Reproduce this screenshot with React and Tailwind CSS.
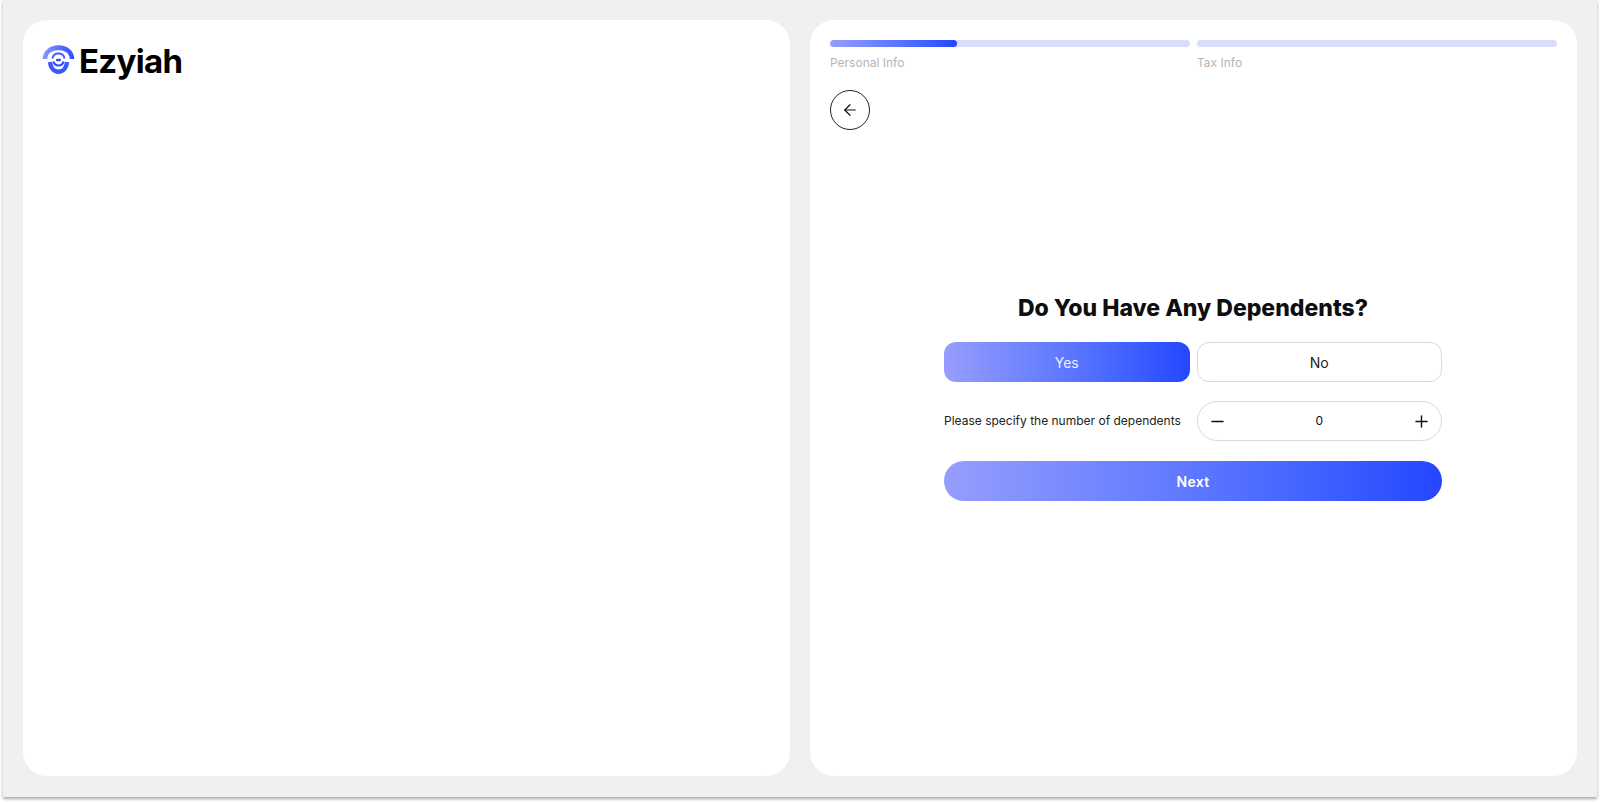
import { ArrowLeft, Minus, Plus } from 'lucide-react';

const Logo = () => (
  <svg width="34" height="32" viewBox="0 0 34 32" fill="none">
    <defs>
      <linearGradient id="logoGrad" x1="0" y1="0" x2="34" y2="0" gradientUnits="userSpaceOnUse">
        <stop offset="0" stopColor="#8f97fd" />
        <stop offset="1" stopColor="#2a49ff" />
      </linearGradient>
    </defs>
    {/* outer top arc */}
    <path d="M3 14C3 7 9 2.6 16.5 2.6C24 2.6 30 7 30 14" stroke="url(#logoGrad)" strokeWidth="4.6" />
    {/* lower arc */}
    <path d="M8 17C8.5 23 12 26.8 16.5 26.8C21 26.8 24.5 23 25 17" stroke="#3a58ff" strokeWidth="4.4" />
    {/* inner ring */}
    <path d="M10.5 13.5C11 10.2 13.5 8.6 16.5 8.6C19.5 8.6 22 10.2 22.5 13.5" stroke="#4560ff" strokeWidth="2" />
    <path d="M11.5 16.5C12 19 14 20.4 16.5 20.4C19 20.4 21 19 21.5 16.5" stroke="#2a49ff" strokeWidth="2" />
    <rect x="14" y="13.7" width="5" height="2.6" rx="1.3" fill="#2a49ff" />
  </svg>
);

function Step({ label, fill }) {
  return (
    <div>
      <div className="h-[7px] rounded-full bg-[#d8ddfc] overflow-hidden">
        {fill && <div className="h-full w-[127px] rounded-full bg-gradient-to-r from-[#979dfd] to-[#2545ff]" />}
      </div>
      <p className="mt-[8px] text-[12px] leading-[16px] text-[#b5b5b5]">{label}</p>
    </div>
  );
}

export default function App() {
  return (
    <div className="h-[803px] bg-white font-['Inter',sans-serif]">
      <div className="mx-[3px] h-[797px] bg-[#eef0f2] shadow-[0_2px_3px_rgba(0,0,0,0.35)] grid grid-cols-2 gap-[20px] px-[20px] pt-[20px] pb-[21px]">
        {/* Left panel */}
        <div className="bg-white rounded-[24px] pl-[19px] pt-[23px]">
          <div className="flex items-center gap-[3px]">
            <Logo />
            <span className="text-[33px] leading-[36px] font-bold tracking-[-0.7px] text-black">Ezyiah</span>
          </div>
        </div>

        {/* Right panel */}
        <div className="bg-white rounded-[24px] px-[20px] pt-[20px] flex flex-col">
          <div className="grid grid-cols-2 gap-[7px]">
            <Step label="Personal Info" fill />
            <Step label="Tax Info" />
          </div>
          <button className="mt-[19px] w-[40px] h-[40px] rounded-full border border-[#222] flex items-center justify-center text-[#111]">
            <ArrowLeft size={18} strokeWidth={1.6} />
          </button>

          {/* Question */}
          <div className="flex-1 flex items-center justify-center pb-[114px] pr-px">
            <div className="w-[498px]">
              <h1 className="text-center text-[23px] leading-[34px] font-extrabold text-[#0f0f0f]">Do You Have Any Dependents?</h1>
              <div className="mt-[17px] grid grid-cols-2 gap-[7px]">
                <button className="h-[40px] rounded-[12px] bg-gradient-to-r from-[#979dfd] to-[#2545ff] text-[14px] text-[#eef0ff]">Yes</button>
                <button className="h-[40px] rounded-[12px] border border-[#d9d9d9] bg-white text-[14px] text-[#222]">No</button>
              </div>
              <div className="mt-[19px] grid grid-cols-2 gap-[7px] items-center">
                <span className="text-[12px] text-[#222] whitespace-nowrap">Please specify the number of dependents</span>
                <div className="h-[40px] rounded-full border border-[#d9d9d9] flex items-center justify-between px-[10px] text-[#111]">
                  <Minus size={19} strokeWidth={1.8} />
                  <span className="text-[12px]">0</span>
                  <Plus size={19} strokeWidth={1.8} />
                </div>
              </div>
              <button className="mt-[20px] w-full h-[40px] rounded-full bg-gradient-to-r from-[#979dfd] to-[#2545ff] text-[14px] font-semibold tracking-[0.3px] text-white">Next</button>
            </div>
          </div>
        </div>
      </div>
    </div>
  );
}
